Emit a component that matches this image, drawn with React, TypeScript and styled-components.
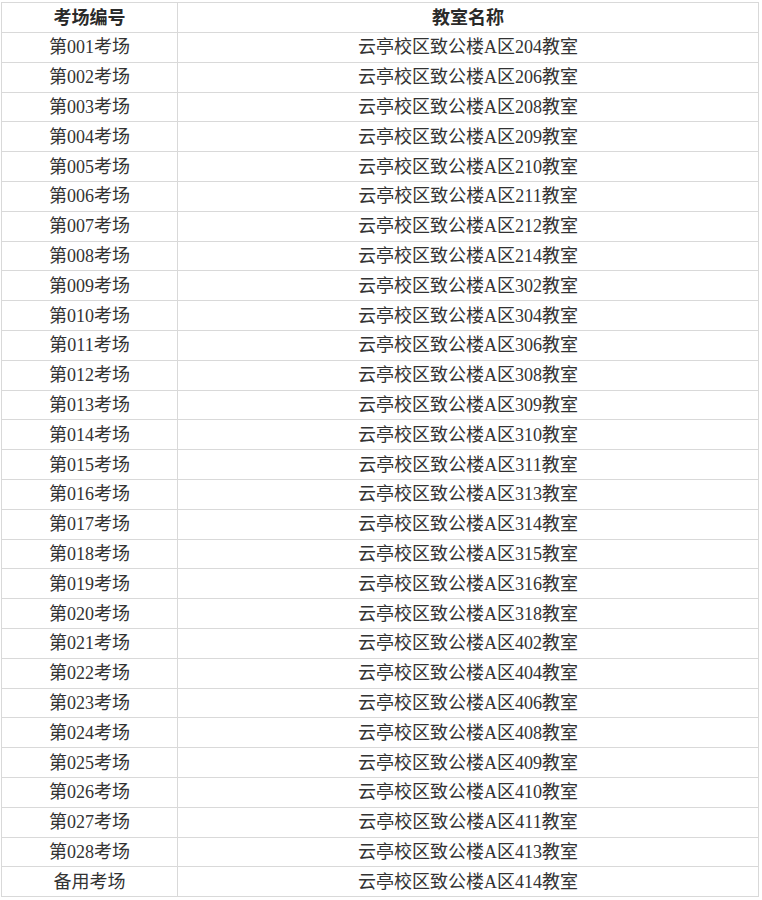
import React from "react";
import styled, { createGlobalStyle } from "styled-components";

const GlobalStyle = createGlobalStyle`
  html, body {
    margin: 0;
    padding: 0;
    background: #ffffff;
  }
`;

const Page = styled.div`
  padding: 2px 0 0 1px;
  font-family: "Liberation Serif", "Noto Sans CJK SC", serif;
  color: #333333;
`;

const Table = styled.table`
  border-collapse: collapse;
  width: 758px;
  table-layout: fixed;
`;

const Row = styled.tr<{ $head?: boolean }>`
  height: ${(p) => (p.$head ? "30px" : "29.8px")};
`;

const Cell = styled.td<{ $head?: boolean }>`
  border: 1px solid #d9d9d9;
  padding: 0;
  text-align: center;
  vertical-align: middle;
  font-size: 18px;
  line-height: 20px;
  font-weight: ${(p) => (p.$head ? 700 : 400)};
  color: ${(p) => (p.$head ? "#2a2a2a" : "#333333")};
  white-space: nowrap;
`;

const rooms = [
  "204", "206", "208", "209", "210", "211", "212", "214", "302", "304",
  "306", "308", "309", "310", "311", "313", "314", "315", "316", "318",
  "402", "404", "406", "408", "409", "410", "411", "413", "414",
];

const rows = rooms.map((room, i) => ({
  site: i < 28 ? `第${String(i + 1).padStart(3, "0")}考场` : "备用考场",
  room: `云亭校区致公楼A区${room}教室`,
}));

function App() {
  return (
    <Page>
      <GlobalStyle />
      <Table>
        <colgroup>
          <col style={{ width: "176px" }} />
          <col />
        </colgroup>
        <tbody>
          <Row $head>
            <Cell $head>考场编号</Cell>
            <Cell $head>教室名称</Cell>
          </Row>
          {rows.map((r) => (
            <Row key={r.site}>
              <Cell>{r.site}</Cell>
              <Cell>{r.room}</Cell>
            </Row>
          ))}
        </tbody>
      </Table>
    </Page>
  );
}

export default App;
